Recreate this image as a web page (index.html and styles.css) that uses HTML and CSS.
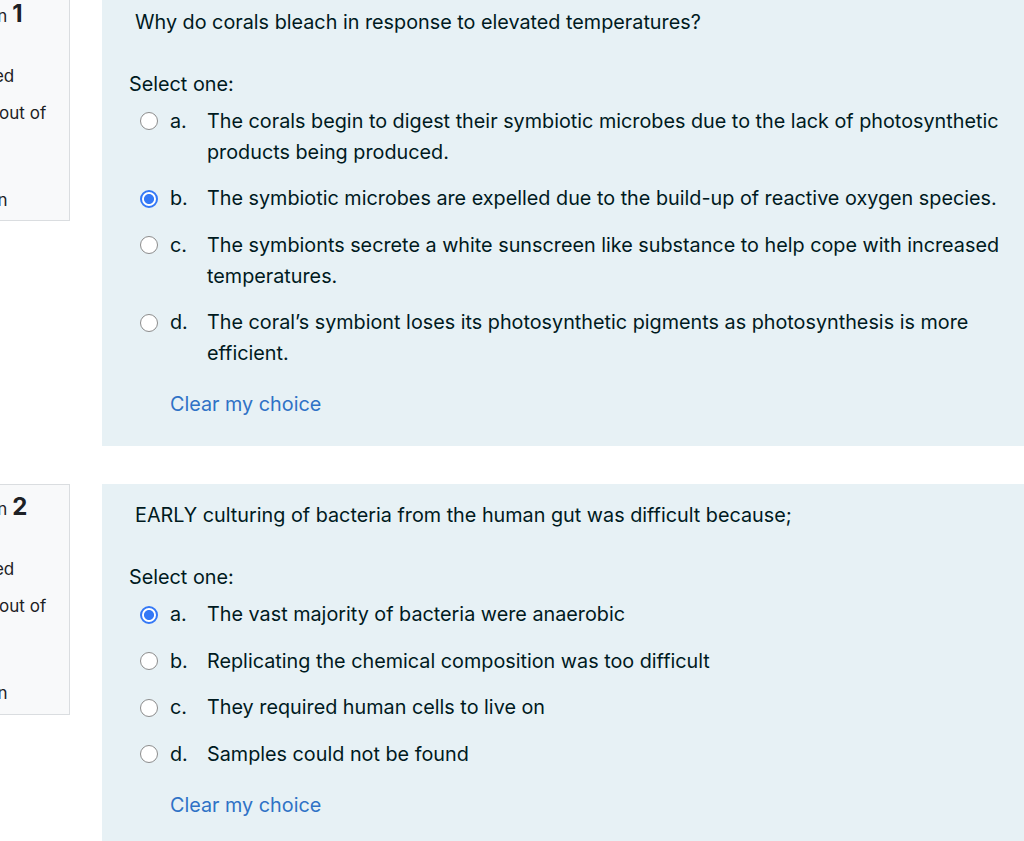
FILE: index.html
```html
<!DOCTYPE html>
<html lang="en">
<head>
<meta charset="utf-8">
<title>Quiz</title>
<link rel="stylesheet" href="styles.css">
</head>
<body>
<div class="page">
  <div class="que">
    <div class="info">
      <h3 class="no">Question <span class="qno">1</span></h3>
      <div class="state">Answered</div>
      <div class="grade">Marked out of<br>1.00</div>
      <div class="flag">Flag question</div>
    </div>
    <div class="formulation">
      <div class="qtext">Why do corals bleach in response to elevated temperatures?</div>
      <div class="prompt">Select one:</div>
      <div class="answer">
        <div class="opt"><span class="radio"></span><span class="num">a.</span><span class="txt">The corals begin to digest their symbiotic microbes due to the lack of photosynthetic products being produced.</span></div>
        <div class="opt"><span class="radio checked"></span><span class="num">b.</span><span class="txt">The symbiotic microbes are expelled due to the build-up of reactive oxygen species.</span></div>
        <div class="opt"><span class="radio"></span><span class="num">c.</span><span class="txt">The symbionts secrete a white sunscreen like substance to help cope with increased temperatures.</span></div>
        <div class="opt"><span class="radio"></span><span class="num">d.</span><span class="txt">The coral’s symbiont loses its photosynthetic pigments as photosynthesis is more efficient.</span></div>
      </div>
      <a class="clear" href="#">Clear my choice</a>
    </div>
  </div>
  <div class="que">
    <div class="info">
      <h3 class="no">Question <span class="qno">2</span></h3>
      <div class="state">Answered</div>
      <div class="grade">Marked out of<br>1.00</div>
      <div class="flag">Flag question</div>
    </div>
    <div class="formulation">
      <div class="qtext">EARLY culturing of bacteria from the human gut was difficult because;</div>
      <div class="prompt">Select one:</div>
      <div class="answer">
        <div class="opt"><span class="radio checked"></span><span class="num">a.</span><span class="txt">The vast majority of bacteria were anaerobic</span></div>
        <div class="opt"><span class="radio"></span><span class="num">b.</span><span class="txt">Replicating the chemical composition was too difficult</span></div>
        <div class="opt"><span class="radio"></span><span class="num">c.</span><span class="txt">They required human cells to live on</span></div>
        <div class="opt"><span class="radio"></span><span class="num">d.</span><span class="txt">Samples could not be found</span></div>
      </div>
      <a class="clear" href="#">Clear my choice</a>
    </div>
  </div>
</div>
</body>
</html>
```
FILE: styles.css
```css
html, body {
  margin: 0;
  padding: 0;
  background: #ffffff;
  overflow: hidden;
}
body {
  font-family: "Inter", "Liberation Sans", sans-serif;
  font-size: 19.8px;
  line-height: 31px;
  color: #001a1e;
}
.page {
  display: flex;
  flex-direction: column;
  gap: 38px;
  margin-top: -10px;
}
.que {
  display: flex;
  align-items: flex-start;
  gap: 32px;
}
.info {
  flex: none;
  box-sizing: border-box;
  width: 150px;
  height: 231px;
  margin-left: -80px;
  padding: 6.5px 0 0 12.5px;
  background: #f8f9fa;
  border: 1px solid #dadde0;
  color: #1d2125;
  font-size: 17px;
  white-space: nowrap;
}
.no {
  margin: 0 0 0 2px;
  font-size: 17px;
  font-weight: 400;
  line-height: 31px;
}
.qno {
  font-size: 24px;
  font-weight: 700;
}
.state {
  margin-top: 29px;
}
.grade {
  margin-top: 6px;
}
.flag {
  margin-top: 25px;
  margin-left: -34px;
}
.formulation {
  flex: 1;
  background: #e7f1f5;
  padding: 16.5px 20px 25.5px 27px;
}
.qtext {
  padding-left: 6px;
  margin-bottom: 31px;
}
.answer {
  display: flex;
  flex-direction: column;
  gap: 15.5px;
  margin-top: 6px;
  padding-left: 11px;
}
.opt {
  display: flex;
  align-items: flex-start;
}
.radio {
  flex: none;
  box-sizing: border-box;
  width: 18px;
  height: 18px;
  margin-top: 6.5px;
  margin-right: 12px;
  border-radius: 50%;
  border: 1.5px solid #8c8c8c;
  background: #ffffff;
}
.radio.checked {
  border: 2px solid #3478f6;
  background: radial-gradient(circle, #3478f6 0 4.6px, #ffffff 5.4px);
}
.num {
  flex: none;
  width: 37px;
}
.txt {
  flex: 1;
}
.clear {
  display: block;
  margin-top: 20px;
  margin-left: 41px;
  color: #2f72c6;
  text-decoration: none;
}
```
